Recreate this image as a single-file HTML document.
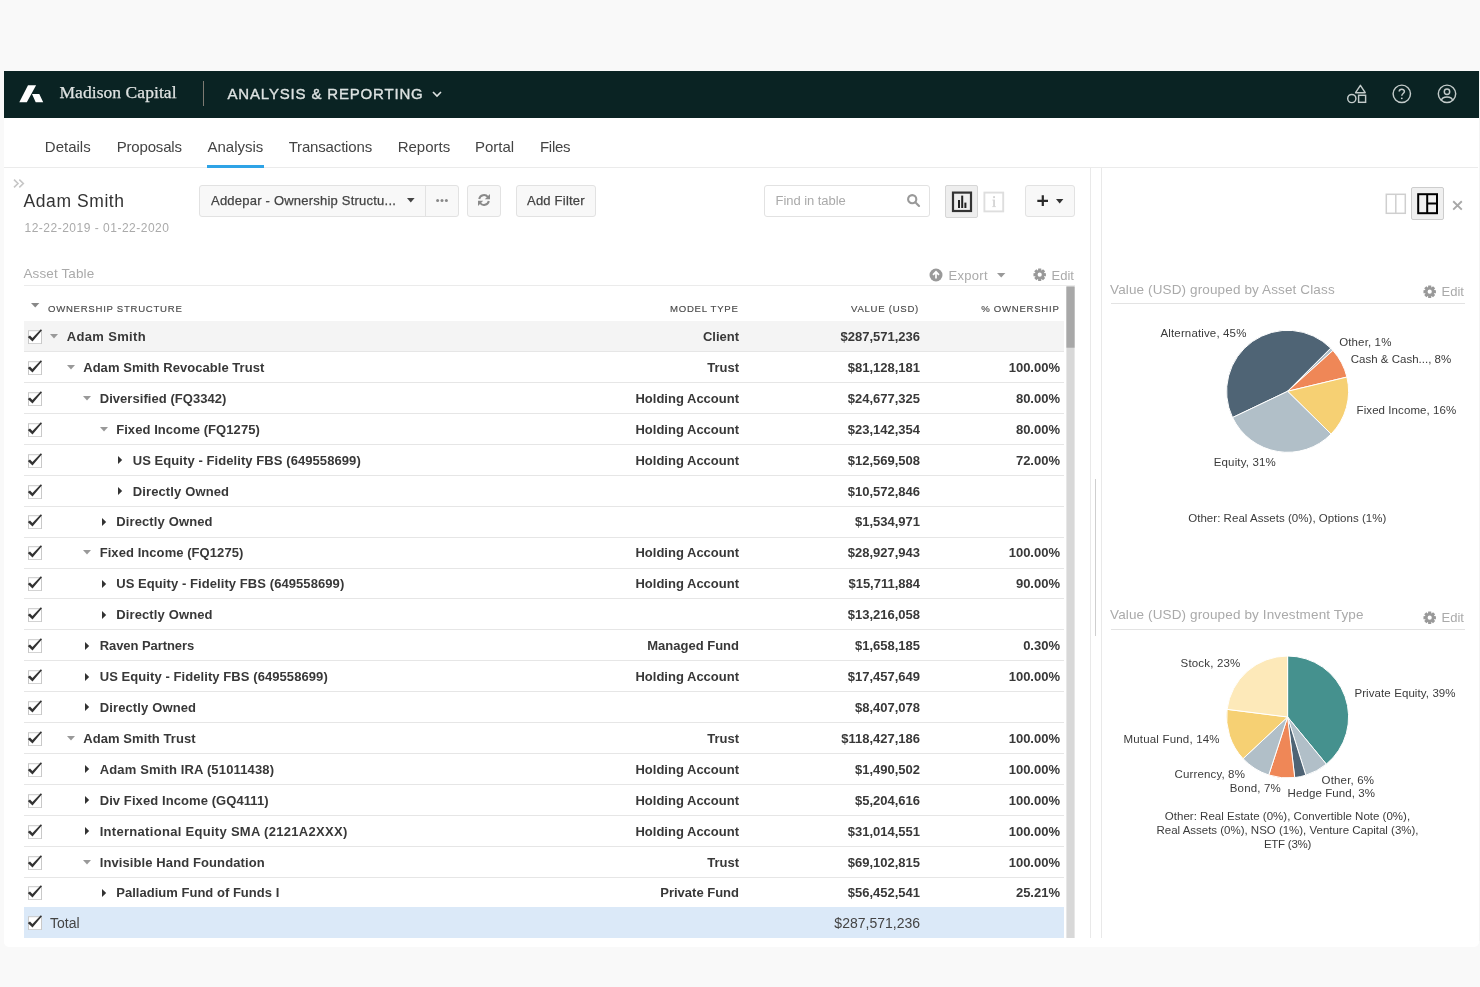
<!DOCTYPE html>
<html>
<head>
<meta charset="utf-8">
<title>Analysis &amp; Reporting</title>
<style>
*{box-sizing:border-box;margin:0;padding:0}
html,body{width:1480px;height:987px;overflow:hidden;background:#f9f9f9;font-family:"Liberation Sans",sans-serif;color:#333}
#card{position:absolute;left:4px;top:71px;width:1474.5px;height:876px;background:#fff;border-radius:0 0 5px 5px}
#strip{position:absolute;left:1478.5px;top:71px;width:1.5px;height:870px;background:#f4f4f4}
#hdr{position:absolute;left:4px;top:71px;width:1474.5px;height:46.6px;background:#0a2323}
#hdr .brand{position:absolute;left:55.5px;top:11px;font-family:"Liberation Serif",serif;font-size:17.5px;color:#dfe3e2;letter-spacing:0.06px;white-space:nowrap;-webkit-text-stroke:0.25px #dfe3e2}
#hdr .div{position:absolute;left:199px;top:10px;width:1px;height:25px;background:#7d7a72}
#hdr .app{position:absolute;left:223.5px;top:13.5px;font-size:15px;letter-spacing:0.83px;color:#dde2e1;white-space:nowrap;-webkit-text-stroke:0.35px #dde2e1}
.abs{position:absolute}
#wrap{position:absolute;left:0;top:0;width:1480px;height:987px;will-change:transform}
#tabs{position:absolute;left:4px;top:118px;width:1474px;height:50px;border-bottom:1px solid #ebebeb}
#tabs span{position:absolute;top:19.5px;font-size:15px;color:#444;white-space:nowrap}
#tabs .ul{position:absolute;left:203px;top:47px;width:56.5px;height:2.5px;background:#2ea3e6}
.btn{position:absolute;background:#f8f8f8;border:1px solid #e2e2e2;border-radius:3px}
.btxt{position:absolute;font-size:13px;color:#444;white-space:nowrap;-webkit-text-stroke:0.25px #444;letter-spacing:0.22px}
#title{position:absolute;left:23.5px;top:191px;font-size:17.5px;color:#333;letter-spacing:0.58px;white-space:nowrap}
#dates{position:absolute;left:24.5px;top:220.5px;font-size:12px;color:#aaa;letter-spacing:0.5px;white-space:nowrap}
.sec{position:absolute;font-size:13px;color:#aaa;white-space:nowrap;letter-spacing:0.18px}
.th{position:absolute;top:303px;font-size:9.6px;letter-spacing:0.72px;color:#4a4a4a;white-space:nowrap;-webkit-text-stroke:0.15px #4a4a4a}
.row{position:absolute;left:24px;width:1040px;height:30.9px;border-bottom:1px solid #e6e6e6;font-size:13px;font-weight:bold;color:#383838}
.row.first{background:#f4f4f4}
.row span{position:absolute;top:7.5px;white-space:nowrap;letter-spacing:0}
.row .mt{right:325px}
.row .vl{right:144px}
.row .ow{right:4px}
.cb{position:absolute;left:3px;top:5px;width:16px;height:18px}
.car{position:absolute}
#total{position:absolute;left:24px;top:907px;width:1040px;height:31px;background:#dbe9f8;font-size:14px;color:#444}
#total span{position:absolute;top:8px;white-space:nowrap}
.vline{position:absolute;width:1px;background:#e9e9e9}
.ptitle{position:absolute;font-size:13.5px;color:#aaa;white-space:nowrap;letter-spacing:0.13px}
.pl{position:absolute;font-size:11.5px;color:#3b3b3b;white-space:nowrap}
</style>
</head>
<body>
<div id="wrap">
<div id="card"></div>
<div id="strip"></div>

<!-- HEADER -->
<div id="hdr">
  <svg class="abs" style="left:15px;top:14px" width="25" height="18" viewBox="0 0 25 18"><path d="M0.3 17.3 L9 0.3 H17.1 L7.8 17.3 Z M13 9.1 H20.3 L24.2 17.3 H16.7 Z" fill="#fff"/></svg>
  <div class="brand">Madison Capital</div>
  <div class="div"></div>
  <div class="app">ANALYSIS &amp; REPORTING</div>
  <svg class="abs" style="left:427.5px;top:19.5px" width="11" height="7" viewBox="0 0 11 7"><path d="M1 1 L5 5 L9 1" fill="none" stroke="#dde2e1" stroke-width="1.6"/></svg>
  <!-- right icons -->
  <svg class="abs" style="left:1340px;top:10px" width="26" height="26" viewBox="0 0 26 26" fill="none" stroke="#c3cbca" stroke-width="1.45">
    <path d="M16.4 4.3 L21.2 11.7 H11.6 Z" stroke-linejoin="round"/><circle cx="7.8" cy="17.5" r="4.1"/><rect x="14.6" y="14.3" width="7" height="7"/></svg>
  <svg class="abs" style="left:1387px;top:12px" width="22" height="22" viewBox="0 0 22 22" fill="none" stroke="#c3cbca" stroke-width="1.45">
    <circle cx="10.8" cy="10.8" r="8.7"/><path d="M8.2 8.6 C8.2 5.6 13.4 5.6 13.4 8.5 C13.4 10.6 10.8 10.4 10.8 12.8" stroke-width="1.5"/><circle cx="10.8" cy="15.3" r="0.9" fill="#c9d0cf" stroke="none"/></svg>
  <svg class="abs" style="left:1431.5px;top:12px" width="22" height="22" viewBox="0 0 22 22" fill="none" stroke="#c3cbca" stroke-width="1.45">
    <circle cx="11" cy="10.8" r="8.7"/><circle cx="11" cy="8.7" r="2.7"/><path d="M5.5 17.4 C5.9 14.6 7.6 13.9 11 13.9 C14.4 13.9 16.1 14.6 16.5 17.4"/></svg>
</div>

<!-- TABS -->
<div id="tabs">
  <span style="left:40.8px">Details</span>
  <span style="left:112.7px;letter-spacing:-0.18px">Proposals</span>
  <span style="left:203.5px">Analysis</span>
  <span style="left:284.7px;letter-spacing:-0.17px">Transactions</span>
  <span style="left:393.7px">Reports</span>
  <span style="left:471px">Portal</span>
  <span style="left:536px;letter-spacing:-0.3px">Files</span>
  <div class="ul"></div>
</div>

<!-- TOOLBAR -->
<svg class="abs" style="left:13px;top:179px" width="12" height="9" viewBox="0 0 12 9" fill="none" stroke="#c6c6c6" stroke-width="1.6"><path d="M1 0.7 L5 4.5 L1 8.3 M6.3 0.7 L10.3 4.5 L6.3 8.3"/></svg>
<div id="title">Adam Smith</div>
<div id="dates">12-22-2019 - 01-22-2020</div>

<div class="btn" style="left:199px;top:185px;width:260px;height:32px"></div>
<div class="abs" style="left:425px;top:186px;width:1px;height:30px;background:#e2e2e2"></div>
<div class="btxt" style="left:211px;top:193px">Addepar - Ownership Structu...</div>
<svg class="abs" style="left:406.5px;top:198.3px" width="8" height="5" viewBox="0 0 8 5"><path d="M0 0H7.6L3.8 4.6Z" fill="#444"/></svg>
<svg class="abs" style="left:436px;top:199px" width="12" height="3" viewBox="0 0 12 3" fill="#888"><circle cx="1.6" cy="1.5" r="1.5"/><circle cx="6" cy="1.5" r="1.5"/><circle cx="10.4" cy="1.5" r="1.5"/></svg>

<div class="btn" style="left:467px;top:185px;width:34px;height:32px"></div>
<svg class="abs" style="left:476.8px;top:193.3px" width="14" height="14" viewBox="0 0 14 14" fill="none" stroke="#8a8a8a" stroke-width="2"><path d="M2.2 6.0 A4.9 4.9 0 0 1 10.9 4.0"/><path d="M11.8 8.0 A4.9 4.9 0 0 1 3.1 10.0"/><path d="M13 1.0 V6.2 H7.8 Z" fill="#8a8a8a" stroke="none"/><path d="M1.0 13 V7.8 H6.2 Z" fill="#8a8a8a" stroke="none"/></svg>

<div class="btn" style="left:516px;top:185px;width:80px;height:32px"></div>
<div class="btxt" style="left:527px;top:193px">Add Filter</div>

<div class="btn" style="left:764px;top:185px;width:166px;height:32px;background:#fff"></div>
<div class="abs" style="left:775.5px;top:193px;font-size:13px;color:#aaa;letter-spacing:-0.05px;white-space:nowrap">Find in table</div>
<svg class="abs" style="left:906px;top:193px" width="15" height="15" viewBox="0 0 15 15" fill="none" stroke="#999" stroke-width="2.1"><circle cx="6.2" cy="6.2" r="4.1"/><path d="M9.3 9.3 L13 13" stroke-linecap="round"/></svg>

<div class="btn" style="left:945px;top:185px;width:33px;height:33px;background:#eee;border-color:#d6d6d6;border-radius:2px"></div>
<svg class="abs" style="left:951px;top:191px" width="22" height="22" viewBox="0 0 22 22"><rect x="2" y="1.6" width="18" height="18.4" fill="none" stroke="#333" stroke-width="2.2"/><rect x="7" y="9" width="2" height="8" fill="#222"/><rect x="10.2" y="4.6" width="2" height="12.4" fill="#222"/><rect x="13.4" y="11.6" width="2" height="5.4" fill="#222"/></svg>
<svg class="abs" style="left:983px;top:191px" width="22" height="22" viewBox="0 0 22 22"><rect x="1.4" y="1.6" width="18.8" height="18.8" fill="none" stroke="#dedede" stroke-width="1.9"/><rect x="10.2" y="8.6" width="1.7" height="7.4" fill="#d2d2d2"/><rect x="9.4" y="8.6" width="1" height="0.9" fill="#d2d2d2"/><rect x="9.2" y="15.2" width="3.7" height="0.9" fill="#d8d8d8"/><rect x="10.1" y="5.2" width="1.9" height="1.9" fill="#d2d2d2"/></svg>

<div class="btn" style="left:1025px;top:185px;width:50px;height:32px"></div>
<svg class="abs" style="left:1036.6px;top:194.6px" width="11.6" height="11.6" viewBox="0 0 11 11"><path d="M5.5 0.3 V10.7 M0.3 5.5 H10.7" stroke="#2a2a2a" stroke-width="2.1" fill="none"/></svg>
<svg class="abs" style="left:1056px;top:198.5px" width="8" height="5" viewBox="0 0 8 5"><path d="M0 0H7.4L3.7 4.4Z" fill="#333"/></svg>

<!-- ASSET TABLE -->
<div class="sec" style="left:23.5px;top:265.8px;font-size:13.5px;letter-spacing:0.11px">Asset Table</div>
<svg class="abs" style="left:929px;top:267.9px" width="14" height="14" viewBox="0 0 14 14"><circle cx="7" cy="7" r="6.5" fill="#999"/><path d="M7 10.6 V4.2 M4 6.8 L7 3.8 L10 6.8" fill="none" stroke="#fff" stroke-width="1.7"/></svg>
<div class="sec" style="left:948.5px;top:267.5px;letter-spacing:0.3px">Export</div>
<svg class="abs" style="left:996.5px;top:273px" width="9" height="5" viewBox="0 0 9 5"><path d="M0 0H8.4L4.2 4.6Z" fill="#999"/></svg>
<svg class="abs gear" style="left:1033px;top:268.1px" width="13.4" height="13.4" viewBox="0 0 14 14"><use href="#gear"/></svg>
<div class="sec" style="left:1051.5px;top:267.5px;letter-spacing:0">Edit</div>
<div class="abs" style="left:24px;top:285px;width:1051px;height:1px;background:#ebebeb"></div>

<svg class="abs" style="left:31px;top:302.8px" width="9" height="5" viewBox="0 0 9 5"><path d="M0 0H8.4L4.2 4.6Z" fill="#888"/></svg>
<div class="th" style="left:48px">OWNERSHIP STRUCTURE</div>
<div class="th" style="right:741.5px">MODEL TYPE</div>
<div class="th" style="right:561px">VALUE (USD)</div>
<div class="th" style="right:420.5px">% OWNERSHIP</div>

<div class="row first" style="top:321px;height:31px"><svg class="cb" style="top:5.00px" viewBox="0 0 16 18"><rect x="1.5" y="4.7" width="13" height="13" fill="#fff" stroke="#c9c9c9" stroke-width="1"/><path d="M0.8 10.9 L3.0 9.6 L5.4 12.1 L13.85 3.35 L15.0 4.35 L5.5 15.5 Z" fill="#333"/></svg><svg class="car" style="left:26.0px;top:13.00px" width="8" height="5" viewBox="0 0 8 5"><path d="M0 0H8L4 4.6Z" fill="#999"/></svg><span class="nm" style="left:42.7px;top:8.00px;letter-spacing:0.346px">Adam Smith</span><span class="mt" style="top:8.00px">Client</span><span class="vl" style="top:8.00px">$287,571,236</span><span class="ow" style="top:8.00px"></span></div>
<div class="row" style="top:352px;height:31px"><svg class="cb" style="top:4.92px" viewBox="0 0 16 18"><rect x="1.5" y="4.7" width="13" height="13" fill="#fff" stroke="#c9c9c9" stroke-width="1"/><path d="M0.8 10.9 L3.0 9.6 L5.4 12.1 L13.85 3.35 L15.0 4.35 L5.5 15.5 Z" fill="#333"/></svg><svg class="car" style="left:42.5px;top:12.92px" width="8" height="5" viewBox="0 0 8 5"><path d="M0 0H8L4 4.6Z" fill="#999"/></svg><span class="nm" style="left:59.2px;top:7.92px;letter-spacing:0.05px">Adam Smith Revocable Trust</span><span class="mt" style="top:7.92px">Trust</span><span class="vl" style="top:7.92px">$81,128,181</span><span class="ow" style="top:7.92px">100.00%</span></div>
<div class="row" style="top:383px;height:31px"><svg class="cb" style="top:4.83px" viewBox="0 0 16 18"><rect x="1.5" y="4.7" width="13" height="13" fill="#fff" stroke="#c9c9c9" stroke-width="1"/><path d="M0.8 10.9 L3.0 9.6 L5.4 12.1 L13.85 3.35 L15.0 4.35 L5.5 15.5 Z" fill="#333"/></svg><svg class="car" style="left:59.0px;top:12.83px" width="8" height="5" viewBox="0 0 8 5"><path d="M0 0H8L4 4.6Z" fill="#999"/></svg><span class="nm" style="left:75.7px;top:7.83px;letter-spacing:0.054px">Diversified (FQ3342)</span><span class="mt" style="top:7.83px">Holding Account</span><span class="vl" style="top:7.83px">$24,677,325</span><span class="ow" style="top:7.83px">80.00%</span></div>
<div class="row" style="top:414px;height:31px"><svg class="cb" style="top:4.75px" viewBox="0 0 16 18"><rect x="1.5" y="4.7" width="13" height="13" fill="#fff" stroke="#c9c9c9" stroke-width="1"/><path d="M0.8 10.9 L3.0 9.6 L5.4 12.1 L13.85 3.35 L15.0 4.35 L5.5 15.5 Z" fill="#333"/></svg><svg class="car" style="left:75.5px;top:12.75px" width="8" height="5" viewBox="0 0 8 5"><path d="M0 0H8L4 4.6Z" fill="#999"/></svg><span class="nm" style="left:92.2px;top:7.75px;letter-spacing:0.065px">Fixed Income (FQ1275)</span><span class="mt" style="top:7.75px">Holding Account</span><span class="vl" style="top:7.75px">$23,142,354</span><span class="ow" style="top:7.75px">80.00%</span></div>
<div class="row" style="top:445px;height:31px"><svg class="cb" style="top:4.66px" viewBox="0 0 16 18"><rect x="1.5" y="4.7" width="13" height="13" fill="#fff" stroke="#c9c9c9" stroke-width="1"/><path d="M0.8 10.9 L3.0 9.6 L5.4 12.1 L13.85 3.35 L15.0 4.35 L5.5 15.5 Z" fill="#333"/></svg><svg class="car" style="left:94.0px;top:11.16px" width="5" height="8" viewBox="0 0 5 8"><path d="M0 0V8L4.2 4Z" fill="#333"/></svg><span class="nm" style="left:108.7px;top:7.66px;letter-spacing:0.075px">US Equity - Fidelity FBS (649558699)</span><span class="mt" style="top:7.66px">Holding Account</span><span class="vl" style="top:7.66px">$12,569,508</span><span class="ow" style="top:7.66px">72.00%</span></div>
<div class="row" style="top:476px;height:31px"><svg class="cb" style="top:4.57px" viewBox="0 0 16 18"><rect x="1.5" y="4.7" width="13" height="13" fill="#fff" stroke="#c9c9c9" stroke-width="1"/><path d="M0.8 10.9 L3.0 9.6 L5.4 12.1 L13.85 3.35 L15.0 4.35 L5.5 15.5 Z" fill="#333"/></svg><svg class="car" style="left:94.0px;top:11.07px" width="5" height="8" viewBox="0 0 5 8"><path d="M0 0V8L4.2 4Z" fill="#333"/></svg><span class="nm" style="left:108.7px;top:7.57px;letter-spacing:0.133px">Directly Owned</span><span class="mt" style="top:7.57px"></span><span class="vl" style="top:7.57px">$10,572,846</span><span class="ow" style="top:7.57px"></span></div>
<div class="row" style="top:507px;height:31px"><svg class="cb" style="top:4.49px" viewBox="0 0 16 18"><rect x="1.5" y="4.7" width="13" height="13" fill="#fff" stroke="#c9c9c9" stroke-width="1"/><path d="M0.8 10.9 L3.0 9.6 L5.4 12.1 L13.85 3.35 L15.0 4.35 L5.5 15.5 Z" fill="#333"/></svg><svg class="car" style="left:77.5px;top:10.99px" width="5" height="8" viewBox="0 0 5 8"><path d="M0 0V8L4.2 4Z" fill="#333"/></svg><span class="nm" style="left:92.2px;top:7.49px;letter-spacing:0.133px">Directly Owned</span><span class="mt" style="top:7.49px"></span><span class="vl" style="top:7.49px">$1,534,971</span><span class="ow" style="top:7.49px"></span></div>
<div class="row" style="top:538px;height:31px"><svg class="cb" style="top:4.40px" viewBox="0 0 16 18"><rect x="1.5" y="4.7" width="13" height="13" fill="#fff" stroke="#c9c9c9" stroke-width="1"/><path d="M0.8 10.9 L3.0 9.6 L5.4 12.1 L13.85 3.35 L15.0 4.35 L5.5 15.5 Z" fill="#333"/></svg><svg class="car" style="left:59.0px;top:12.40px" width="8" height="5" viewBox="0 0 8 5"><path d="M0 0H8L4 4.6Z" fill="#999"/></svg><span class="nm" style="left:75.7px;top:7.40px;letter-spacing:0.065px">Fixed Income (FQ1275)</span><span class="mt" style="top:7.40px">Holding Account</span><span class="vl" style="top:7.40px">$28,927,943</span><span class="ow" style="top:7.40px">100.00%</span></div>
<div class="row" style="top:569px;height:30px"><svg class="cb" style="top:4.32px" viewBox="0 0 16 18"><rect x="1.5" y="4.7" width="13" height="13" fill="#fff" stroke="#c9c9c9" stroke-width="1"/><path d="M0.8 10.9 L3.0 9.6 L5.4 12.1 L13.85 3.35 L15.0 4.35 L5.5 15.5 Z" fill="#333"/></svg><svg class="car" style="left:77.5px;top:10.82px" width="5" height="8" viewBox="0 0 5 8"><path d="M0 0V8L4.2 4Z" fill="#333"/></svg><span class="nm" style="left:92.2px;top:7.32px;letter-spacing:0.075px">US Equity - Fidelity FBS (649558699)</span><span class="mt" style="top:7.32px">Holding Account</span><span class="vl" style="top:7.32px">$15,711,884</span><span class="ow" style="top:7.32px">90.00%</span></div>
<div class="row" style="top:599px;height:31px"><svg class="cb" style="top:5.24px" viewBox="0 0 16 18"><rect x="1.5" y="4.7" width="13" height="13" fill="#fff" stroke="#c9c9c9" stroke-width="1"/><path d="M0.8 10.9 L3.0 9.6 L5.4 12.1 L13.85 3.35 L15.0 4.35 L5.5 15.5 Z" fill="#333"/></svg><svg class="car" style="left:77.5px;top:11.74px" width="5" height="8" viewBox="0 0 5 8"><path d="M0 0V8L4.2 4Z" fill="#333"/></svg><span class="nm" style="left:92.2px;top:8.24px;letter-spacing:0.133px">Directly Owned</span><span class="mt" style="top:8.24px"></span><span class="vl" style="top:8.24px">$13,216,058</span><span class="ow" style="top:8.24px"></span></div>
<div class="row" style="top:630px;height:31px"><svg class="cb" style="top:5.15px" viewBox="0 0 16 18"><rect x="1.5" y="4.7" width="13" height="13" fill="#fff" stroke="#c9c9c9" stroke-width="1"/><path d="M0.8 10.9 L3.0 9.6 L5.4 12.1 L13.85 3.35 L15.0 4.35 L5.5 15.5 Z" fill="#333"/></svg><svg class="car" style="left:61.0px;top:11.65px" width="5" height="8" viewBox="0 0 5 8"><path d="M0 0V8L4.2 4Z" fill="#333"/></svg><span class="nm" style="left:75.7px;top:8.15px;letter-spacing:-0.064px">Raven Partners</span><span class="mt" style="top:8.15px">Managed Fund</span><span class="vl" style="top:8.15px">$1,658,185</span><span class="ow" style="top:8.15px">0.30%</span></div>
<div class="row" style="top:661px;height:31px"><svg class="cb" style="top:5.07px" viewBox="0 0 16 18"><rect x="1.5" y="4.7" width="13" height="13" fill="#fff" stroke="#c9c9c9" stroke-width="1"/><path d="M0.8 10.9 L3.0 9.6 L5.4 12.1 L13.85 3.35 L15.0 4.35 L5.5 15.5 Z" fill="#333"/></svg><svg class="car" style="left:61.0px;top:11.57px" width="5" height="8" viewBox="0 0 5 8"><path d="M0 0V8L4.2 4Z" fill="#333"/></svg><span class="nm" style="left:75.7px;top:8.07px;letter-spacing:0.075px">US Equity - Fidelity FBS (649558699)</span><span class="mt" style="top:8.07px">Holding Account</span><span class="vl" style="top:8.07px">$17,457,649</span><span class="ow" style="top:8.07px">100.00%</span></div>
<div class="row" style="top:692px;height:31px"><svg class="cb" style="top:4.98px" viewBox="0 0 16 18"><rect x="1.5" y="4.7" width="13" height="13" fill="#fff" stroke="#c9c9c9" stroke-width="1"/><path d="M0.8 10.9 L3.0 9.6 L5.4 12.1 L13.85 3.35 L15.0 4.35 L5.5 15.5 Z" fill="#333"/></svg><svg class="car" style="left:61.0px;top:11.48px" width="5" height="8" viewBox="0 0 5 8"><path d="M0 0V8L4.2 4Z" fill="#333"/></svg><span class="nm" style="left:75.7px;top:7.98px;letter-spacing:0.133px">Directly Owned</span><span class="mt" style="top:7.98px"></span><span class="vl" style="top:7.98px">$8,407,078</span><span class="ow" style="top:7.98px"></span></div>
<div class="row" style="top:723px;height:31px"><svg class="cb" style="top:4.89px" viewBox="0 0 16 18"><rect x="1.5" y="4.7" width="13" height="13" fill="#fff" stroke="#c9c9c9" stroke-width="1"/><path d="M0.8 10.9 L3.0 9.6 L5.4 12.1 L13.85 3.35 L15.0 4.35 L5.5 15.5 Z" fill="#333"/></svg><svg class="car" style="left:42.5px;top:12.89px" width="8" height="5" viewBox="0 0 8 5"><path d="M0 0H8L4 4.6Z" fill="#999"/></svg><span class="nm" style="left:59.2px;top:7.89px;letter-spacing:0.084px">Adam Smith Trust</span><span class="mt" style="top:7.89px">Trust</span><span class="vl" style="top:7.89px">$118,427,186</span><span class="ow" style="top:7.89px">100.00%</span></div>
<div class="row" style="top:754px;height:31px"><svg class="cb" style="top:4.81px" viewBox="0 0 16 18"><rect x="1.5" y="4.7" width="13" height="13" fill="#fff" stroke="#c9c9c9" stroke-width="1"/><path d="M0.8 10.9 L3.0 9.6 L5.4 12.1 L13.85 3.35 L15.0 4.35 L5.5 15.5 Z" fill="#333"/></svg><svg class="car" style="left:61.0px;top:11.31px" width="5" height="8" viewBox="0 0 5 8"><path d="M0 0V8L4.2 4Z" fill="#333"/></svg><span class="nm" style="left:75.7px;top:7.81px;letter-spacing:0.149px">Adam Smith IRA (51011438)</span><span class="mt" style="top:7.81px">Holding Account</span><span class="vl" style="top:7.81px">$1,490,502</span><span class="ow" style="top:7.81px">100.00%</span></div>
<div class="row" style="top:785px;height:31px"><svg class="cb" style="top:4.72px" viewBox="0 0 16 18"><rect x="1.5" y="4.7" width="13" height="13" fill="#fff" stroke="#c9c9c9" stroke-width="1"/><path d="M0.8 10.9 L3.0 9.6 L5.4 12.1 L13.85 3.35 L15.0 4.35 L5.5 15.5 Z" fill="#333"/></svg><svg class="car" style="left:61.0px;top:11.22px" width="5" height="8" viewBox="0 0 5 8"><path d="M0 0V8L4.2 4Z" fill="#333"/></svg><span class="nm" style="left:75.7px;top:7.72px;letter-spacing:0.084px">Div Fixed Income (GQ4111)</span><span class="mt" style="top:7.72px">Holding Account</span><span class="vl" style="top:7.72px">$5,204,616</span><span class="ow" style="top:7.72px">100.00%</span></div>
<div class="row" style="top:816px;height:31px"><svg class="cb" style="top:4.64px" viewBox="0 0 16 18"><rect x="1.5" y="4.7" width="13" height="13" fill="#fff" stroke="#c9c9c9" stroke-width="1"/><path d="M0.8 10.9 L3.0 9.6 L5.4 12.1 L13.85 3.35 L15.0 4.35 L5.5 15.5 Z" fill="#333"/></svg><svg class="car" style="left:61.0px;top:11.14px" width="5" height="8" viewBox="0 0 5 8"><path d="M0 0V8L4.2 4Z" fill="#333"/></svg><span class="nm" style="left:75.7px;top:7.64px;letter-spacing:0.298px">International Equity SMA (2121A2XXX)</span><span class="mt" style="top:7.64px">Holding Account</span><span class="vl" style="top:7.64px">$31,014,551</span><span class="ow" style="top:7.64px">100.00%</span></div>
<div class="row" style="top:847px;height:31px"><svg class="cb" style="top:4.55px" viewBox="0 0 16 18"><rect x="1.5" y="4.7" width="13" height="13" fill="#fff" stroke="#c9c9c9" stroke-width="1"/><path d="M0.8 10.9 L3.0 9.6 L5.4 12.1 L13.85 3.35 L15.0 4.35 L5.5 15.5 Z" fill="#333"/></svg><svg class="car" style="left:59.0px;top:12.55px" width="8" height="5" viewBox="0 0 8 5"><path d="M0 0H8L4 4.6Z" fill="#999"/></svg><span class="nm" style="left:75.7px;top:7.55px;letter-spacing:0.104px">Invisible Hand Foundation</span><span class="mt" style="top:7.55px">Trust</span><span class="vl" style="top:7.55px">$69,102,815</span><span class="ow" style="top:7.55px">100.00%</span></div>
<div class="row" style="top:878px;height:31px"><svg class="cb" style="top:4.47px" viewBox="0 0 16 18"><rect x="1.5" y="4.7" width="13" height="13" fill="#fff" stroke="#c9c9c9" stroke-width="1"/><path d="M0.8 10.9 L3.0 9.6 L5.4 12.1 L13.85 3.35 L15.0 4.35 L5.5 15.5 Z" fill="#333"/></svg><svg class="car" style="left:77.5px;top:10.97px" width="5" height="8" viewBox="0 0 5 8"><path d="M0 0V8L4.2 4Z" fill="#333"/></svg><span class="nm" style="left:92.2px;top:7.47px;letter-spacing:0.024px">Palladium Fund of Funds I</span><span class="mt" style="top:7.47px">Private Fund</span><span class="vl" style="top:7.47px">$56,452,541</span><span class="ow" style="top:7.47px">25.21%</span></div>

<div id="total">
  <svg class="cb" style="top:4.9px" viewBox="0 0 16 18"><rect x="1.5" y="4.7" width="13" height="13" fill="#fff" stroke="#c9c9c9" stroke-width="1"/><path d="M0.8 10.9 L3.0 9.6 L5.4 12.1 L13.85 3.35 L15.0 4.35 L5.5 15.5 Z" fill="#333"/></svg>
  <span style="left:26px">Total</span><span style="right:144px">$287,571,236</span>
</div>

<!-- scrollbar -->
<svg class="abs" style="left:1060px;top:280px" width="20" height="664" viewBox="0 0 20 664"><rect x="6.4" y="6.5" width="8.2" height="651.5" fill="#d8d8d8"/><rect x="6.4" y="6.5" width="8.2" height="61.2" fill="#a8a8a8"/></svg>

<!-- splitters -->
<div class="vline" style="left:1090px;top:168px;height:770px"></div>
<div class="vline" style="left:1101px;top:168px;height:770px"></div>
<div class="abs" style="left:1095px;top:479px;width:1px;height:157px;background:#cfcfcf"></div>


<!-- panel icons -->
<svg class="abs" style="left:1384px;top:192px" width="24" height="24" viewBox="0 0 24 24" fill="none" stroke="#cfcfcf" stroke-width="1.5"><rect x="2.3" y="2.3" width="19" height="19"/><path d="M11.8 2.3 V21.3"/></svg>
<div class="btn" style="left:1411px;top:187px;width:33px;height:33px;background:#f0f0f0;border-color:#cdcdcd;border-radius:2px"></div>
<svg class="abs" style="left:1416px;top:192px" width="24" height="24" viewBox="0 0 24 24" fill="none" stroke="#000" stroke-width="2"><rect x="2.2" y="2.2" width="18.8" height="19"/><path d="M11.2 2.2 V21.2 M11.2 11.6 H21"/></svg>
<svg class="abs" style="left:1452px;top:200px" width="11" height="11" viewBox="0 0 11 11"><path d="M1.2 1.2 L9.8 9.6 M9.8 1.2 L1.2 9.6" stroke="#a8a8a8" stroke-width="1.9" fill="none"/></svg>

<div class="ptitle" style="left:1110px;top:281.6px">Value (USD) grouped by Asset Class</div>
<svg class="abs" style="left:1422.8px;top:285px" width="13.4" height="13.4" viewBox="0 0 14 14"><use href="#gear"/></svg>
<div class="sec" style="left:1441.5px;top:284px;letter-spacing:0">Edit</div>
<div class="abs" style="left:1110.5px;top:303px;width:354px;height:1px;background:#e3e3e3"></div>

<div class="ptitle" style="left:1110px;top:607.1px">Value (USD) grouped by Investment Type</div>
<svg class="abs" style="left:1422.8px;top:610.5px" width="13.4" height="13.4" viewBox="0 0 14 14"><use href="#gear"/></svg>
<div class="sec" style="left:1441.5px;top:609.5px;letter-spacing:0">Edit</div>
<div class="abs" style="left:1110.5px;top:628.5px;width:354px;height:1px;background:#e3e3e3"></div>

<svg class="abs" style="left:0;top:0" width="1480" height="987" viewBox="0 0 1480 987">
<path d="M1287.60 391.30 L1232.54 417.56 A61 61 0 0 1 1330.73 348.17 Z" fill="#4f6475" stroke="#fff" stroke-width="1" stroke-linejoin="round"/>
<path d="M1287.60 391.30 L1330.73 348.17 A61 61 0 0 1 1332.93 350.48 Z" fill="#b1bfc8" stroke="#fff" stroke-width="1" stroke-linejoin="round"/>
<path d="M1287.60 391.30 L1332.93 350.48 A61 61 0 0 1 1346.91 377.06 Z" fill="#ef8757" stroke="#fff" stroke-width="1" stroke-linejoin="round"/>
<path d="M1287.60 391.30 L1346.91 377.06 A61 61 0 0 1 1331.11 434.06 Z" fill="#f6d073" stroke="#fff" stroke-width="1" stroke-linejoin="round"/>
<path d="M1287.60 391.30 L1331.11 434.06 A61 61 0 0 1 1232.54 417.56 Z" fill="#b1bfc8" stroke="#fff" stroke-width="1" stroke-linejoin="round"/>
<path d="M1287.60 717.00 L1287.60 656.00 A61 61 0 0 1 1326.32 764.14 Z" fill="#45918e" stroke="#fff" stroke-width="1" stroke-linejoin="round"/>
<path d="M1287.60 717.00 L1326.32 764.14 A61 61 0 0 1 1305.84 775.21 Z" fill="#b1bfc8" stroke="#fff" stroke-width="1" stroke-linejoin="round"/>
<path d="M1287.60 717.00 L1305.84 775.21 A61 61 0 0 1 1294.72 777.58 Z" fill="#4f6475" stroke="#fff" stroke-width="1" stroke-linejoin="round"/>
<path d="M1287.60 717.00 L1294.72 777.58 A61 61 0 0 1 1268.75 775.01 Z" fill="#ef8757" stroke="#fff" stroke-width="1" stroke-linejoin="round"/>
<path d="M1287.60 717.00 L1268.75 775.01 A61 61 0 0 1 1243.06 758.68 Z" fill="#b1bfc8" stroke="#fff" stroke-width="1" stroke-linejoin="round"/>
<path d="M1287.60 717.00 L1243.06 758.68 A61 61 0 0 1 1227.08 709.35 Z" fill="#f6d073" stroke="#fff" stroke-width="1" stroke-linejoin="round"/>
<path d="M1287.60 717.00 L1227.08 709.35 A61 61 0 0 1 1287.60 656.00 Z" fill="#fde9b9" stroke="#fff" stroke-width="1" stroke-linejoin="round"/>
</svg>
<div class="pl" style="left:1160.5px;top:327.1px;letter-spacing:0.141px">Alternative, 45%</div>
<div class="pl" style="left:1339.2px;top:336.1px;letter-spacing:0.129px">Other, 1%</div>
<div class="pl" style="left:1350.8px;top:352.9px;letter-spacing:0.0px">Cash &amp; Cash..., 8%</div>
<div class="pl" style="left:1356.6px;top:404.3px;letter-spacing:0.074px">Fixed Income, 16%</div>
<div class="pl" style="left:1213.7px;top:455.6px;letter-spacing:0.162px">Equity, 31%</div>
<div class="pl" style="left:1117.3px;width:340px;text-align:center;top:511.9px;letter-spacing:0.036px">Other: Real Assets (0%), Options (1%)</div>
<div class="pl" style="left:1180.6px;top:657.1px;letter-spacing:0.173px">Stock, 23%</div>
<div class="pl" style="left:1354.4px;top:686.8px;letter-spacing:0.094px">Private Equity, 39%</div>
<div class="pl" style="left:1123.4px;top:733.1px;letter-spacing:0.191px">Mutual Fund, 14%</div>
<div class="pl" style="left:1174.5px;top:768.3px;letter-spacing:0.141px">Currency, 8%</div>
<div class="pl" style="left:1229.8px;top:782.3px;letter-spacing:0.153px">Bond, 7%</div>
<div class="pl" style="left:1321.6px;top:774.1px;letter-spacing:0.162px">Other, 6%</div>
<div class="pl" style="left:1287.6px;top:787.1px;letter-spacing:0.085px">Hedge Fund, 3%</div>
<div class="pl" style="left:1117.5px;width:340px;text-align:center;top:809.9px;letter-spacing:0.011px">Other: Real Estate (0%), Convertible Note (0%),</div>
<div class="pl" style="left:1117.5px;width:340px;text-align:center;top:823.9px;letter-spacing:-0.014px">Real Assets (0%), NSO (1%), Venture Capital (3%),</div>
<div class="pl" style="left:1117.5px;width:340px;text-align:center;top:837.6px;letter-spacing:-0.25px">ETF (3%)</div>

<svg width="0" height="0" style="position:absolute"><defs>
<g id="gear"><path fill="#999" fill-rule="evenodd" d="M5.27 2.41 L5.41 0.49 L8.59 0.49 L8.73 2.41 L9.02 2.54 L10.48 1.27 L12.73 3.52 L11.46 4.98 L11.59 5.27 L13.51 5.41 L13.51 8.59 L11.59 8.73 L11.46 9.02 L12.73 10.48 L10.48 12.73 L9.02 11.46 L8.73 11.59 L8.59 13.51 L5.41 13.51 L5.27 11.59 L4.98 11.46 L3.52 12.73 L1.27 10.48 L2.54 9.02 L2.41 8.73 L0.49 8.59 L0.49 5.41 L2.41 5.27 L2.54 4.98 L1.27 3.52 L3.52 1.27 L4.98 2.54 Z M7 4.8 A2.2 2.2 0 1 0 7 9.2 A2.2 2.2 0 1 0 7 4.8 Z"/></g>
</defs></svg>
</div>
</body>
</html>
